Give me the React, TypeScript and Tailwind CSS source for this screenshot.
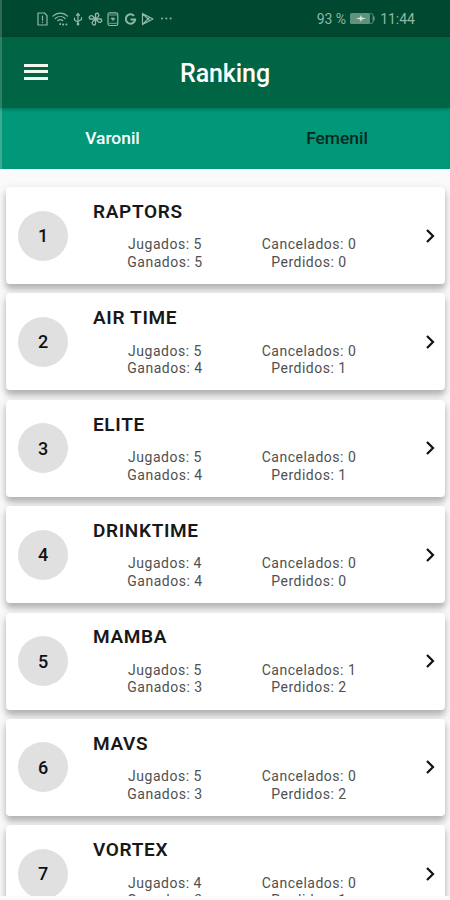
import React from 'react';

type Team = { name: string; played: number; cancelled: number; won: number; lost: number };

const teams: Team[] = [
  { name: 'RAPTORS', played: 5, cancelled: 0, won: 5, lost: 0 },
  { name: 'AIR TIME', played: 5, cancelled: 0, won: 4, lost: 1 },
  { name: 'ELITE', played: 5, cancelled: 0, won: 4, lost: 1 },
  { name: 'DRINKTIME', played: 4, cancelled: 0, won: 4, lost: 0 },
  { name: 'MAMBA', played: 5, cancelled: 1, won: 3, lost: 2 },
  { name: 'MAVS', played: 5, cancelled: 0, won: 3, lost: 2 },
  { name: 'VORTEX', played: 4, cancelled: 0, won: 3, lost: 1 },
];

function StatusIcons() {
  return (
    <svg className="ml-[34px] h-4 w-[138px]" viewBox="0 0 138 16" fill="none" stroke="#8fb9a5" strokeWidth="1.2" strokeLinecap="round" strokeLinejoin="round">
      {/* SIM alert */}
      <path d="M2 2h6.500l2.500 2.700v9.300h-9z" />
      <path d="M6.500 5v4.200M6.500 11.200v.300" />
      {/* Wi-Fi */}
      <path d="M17 5.200c4-4.200 10.500-4.200 14.500 0M19.300 7.500c3-2.700 7-2.700 9.800 0M21.700 9.700c1.600-1.300 3.500-1.300 5 0" />
      <path d="M24.200 13v.200M27 13.500h.300M30.300 13.500h.200" strokeWidth="1.800" />
      {/* USB */}
      <path d="M42 3v10.500M38.500 7v2l3.500 2.300M45.500 6.500v2L42 10.500M40.500 4.300 42 2.500l1.500 1.800" />
      <circle cx="42" cy="13.200" r=".8" />
      {/* Pinwheel */}
      <g strokeWidth="1.300">
        <path d="M59.500 8V2.800c2.600-1.600 4.500 1.400 2.500 3.200z" />
        <path d="M59.500 8h5.700c1.600 2.600-1.400 4.500-3.200 2.500z" />
        <path d="M59.500 8v5.500c-2.600 1.600-4.500-1.400-2.500-3.200z" />
        <path d="M59.500 8h-5.700c-1.600-2.600 1.400-4.500 3.200-2.500z" />
      </g>
      {/* Card */}
      <rect x="72" y="1.800" width="9.800" height="12.700" rx="1.800" />
      <path d="M73.500 4h7M73.500 12.300h7" strokeWidth=".8" />
      <path d="M76.900 9.500l-1.900-2q.8-1.400 1.900-.3 1.100-1.100 1.900.3z" fill="#8fb9a5" strokeWidth=".5" />
      {/* Google */}
      <path d="M98 4.800a4.700 4.700 0 1 0 1.200 3.700h-4.700" strokeWidth="2" strokeLinecap="butt" />
      {/* Play */}
      <path d="M106.500 2.500v11l10.500-5.500zM106.500 2.500l7 7M106.500 13.500l7-7" />
      <g fill="#8fb9a5" stroke="none">
        <circle cx="126" cy="7.500" r="1" />
        <circle cx="130.300" cy="7.500" r="1" />
        <circle cx="134.600" cy="7.500" r="1" />
      </g>
    </svg>
  );
}

function Battery() {
  return (
    <svg className="ml-1 mr-[5px] h-[11px] w-[25px]" viewBox="0 0 25 11">
      <rect x="0" y="0" width="20" height="11" rx="1.500" fill="#5f937d" />
      <path d="M20 .7h1.500a1.500 1.500 0 0 1 1.500 1.500v6.600a1.500 1.500 0 0 1-1.500 1.500H20" fill="none" stroke="#5f937d" />
      <path d="M23.500 3.500h1v4h-1z" fill="#8fb9a5" />
      <path d="M6 5.500l4-1 .8-2.500 1.200 2.500 4 1-4 1-1.200 2.500-.8-2.500z" fill="#d3e5dc" />
    </svg>
  );
}

function TeamCard({ team, rank }: { team: Team; rank: number }) {
  return (
    <li className="relative flex h-[97px] shrink-0 items-center rounded-[4px] bg-white pl-[12.500px] shadow-[0_5px_5px_0_rgba(0,0,0,0.160),0_4px_10px_1px_rgba(0,0,0,0.160)]">
      <div className="flex size-[50px] shrink-0 items-center justify-center rounded-full bg-[#e0e0e0] text-[18px] font-medium text-[#111]">{rank}</div>
      <div className="ml-[25px] flex h-full w-[288px] shrink-0 flex-col">
        <h2 className="mt-[12.800px] text-[19px] leading-6 font-semibold tracking-[0.650px] whitespace-nowrap text-[#181818]">{team.name}</h2>
        <div className="mt-[12.500px] grid grid-cols-2 text-center text-[14px] leading-[17.600px] font-normal tracking-[0.500px] text-[#505050]">
          <span>Jugados: {team.played}</span>
          <span>Cancelados: {team.cancelled}</span>
          <span>Ganados: {team.won}</span>
          <span>Perdidos: {team.lost}</span>
        </div>
      </div>
      <svg className="ml-[45px] h-[14px] w-[9px] shrink-0" viewBox="0 0 9 14" fill="none" stroke="#111" strokeWidth="2.200">
        <path d="M1 1l6 6-6 6" />
      </svg>
    </li>
  );
}

export default function App() {
  return (
    <div className="flex h-[900px] w-[450px] flex-col overflow-hidden bg-[#fafafa] font-['Roboto',sans-serif]">
      <div className="flex h-[37px] shrink-0 items-center border-l-2 border-[#2f6a54] bg-[#00482f] text-[14px] text-[#8fb9a5]">
        <StatusIcons />
        <span className="ml-auto pt-px">93 %</span>
        <Battery />
        <span className="mr-[35px] pt-px">11:44</span>
      </div>
      <header className="relative z-10 grid h-[71px] shrink-0 grid-cols-[1fr_auto_1fr] items-center border-l-2 border-[#2f8064] bg-[#006544] pr-[2px] shadow-[0_1px_4px_rgba(0,0,0,0.300)]">
        <button className="ml-[22px] flex w-6 flex-col gap-[3.500px] pb-[2px]" aria-label="Menu">
          <span className="h-[3px] bg-[#f2f8ee]" />
          <span className="h-[3px] bg-[#f2f8ee]" />
          <span className="h-[3px] bg-[#f2f8ee]" />
        </button>
        <h1 className="pt-[2px] text-[25px] font-medium tracking-[-0.100px] text-white">Ranking</h1>
      </header>
      <nav className="grid h-[61px] shrink-0 grid-cols-2 place-items-center border-l-2 border-[#3aac92] bg-[#009879] pb-px text-[17.400px] font-medium">
        <span className="pr-[3px] text-white">Varonil</span>
        <span className="pr-[2px] text-[#06271e]">Femenil</span>
      </nav>
      <main className="h-[727px] shrink-0 overflow-hidden px-[5.500px] pt-[18px]">
        <ul className="flex flex-col gap-[9.400px]">
          {teams.map((team, i) => (
            <TeamCard key={team.name} team={team} rank={i + 1} />
          ))}
        </ul>
      </main>
    </div>
  );
}
